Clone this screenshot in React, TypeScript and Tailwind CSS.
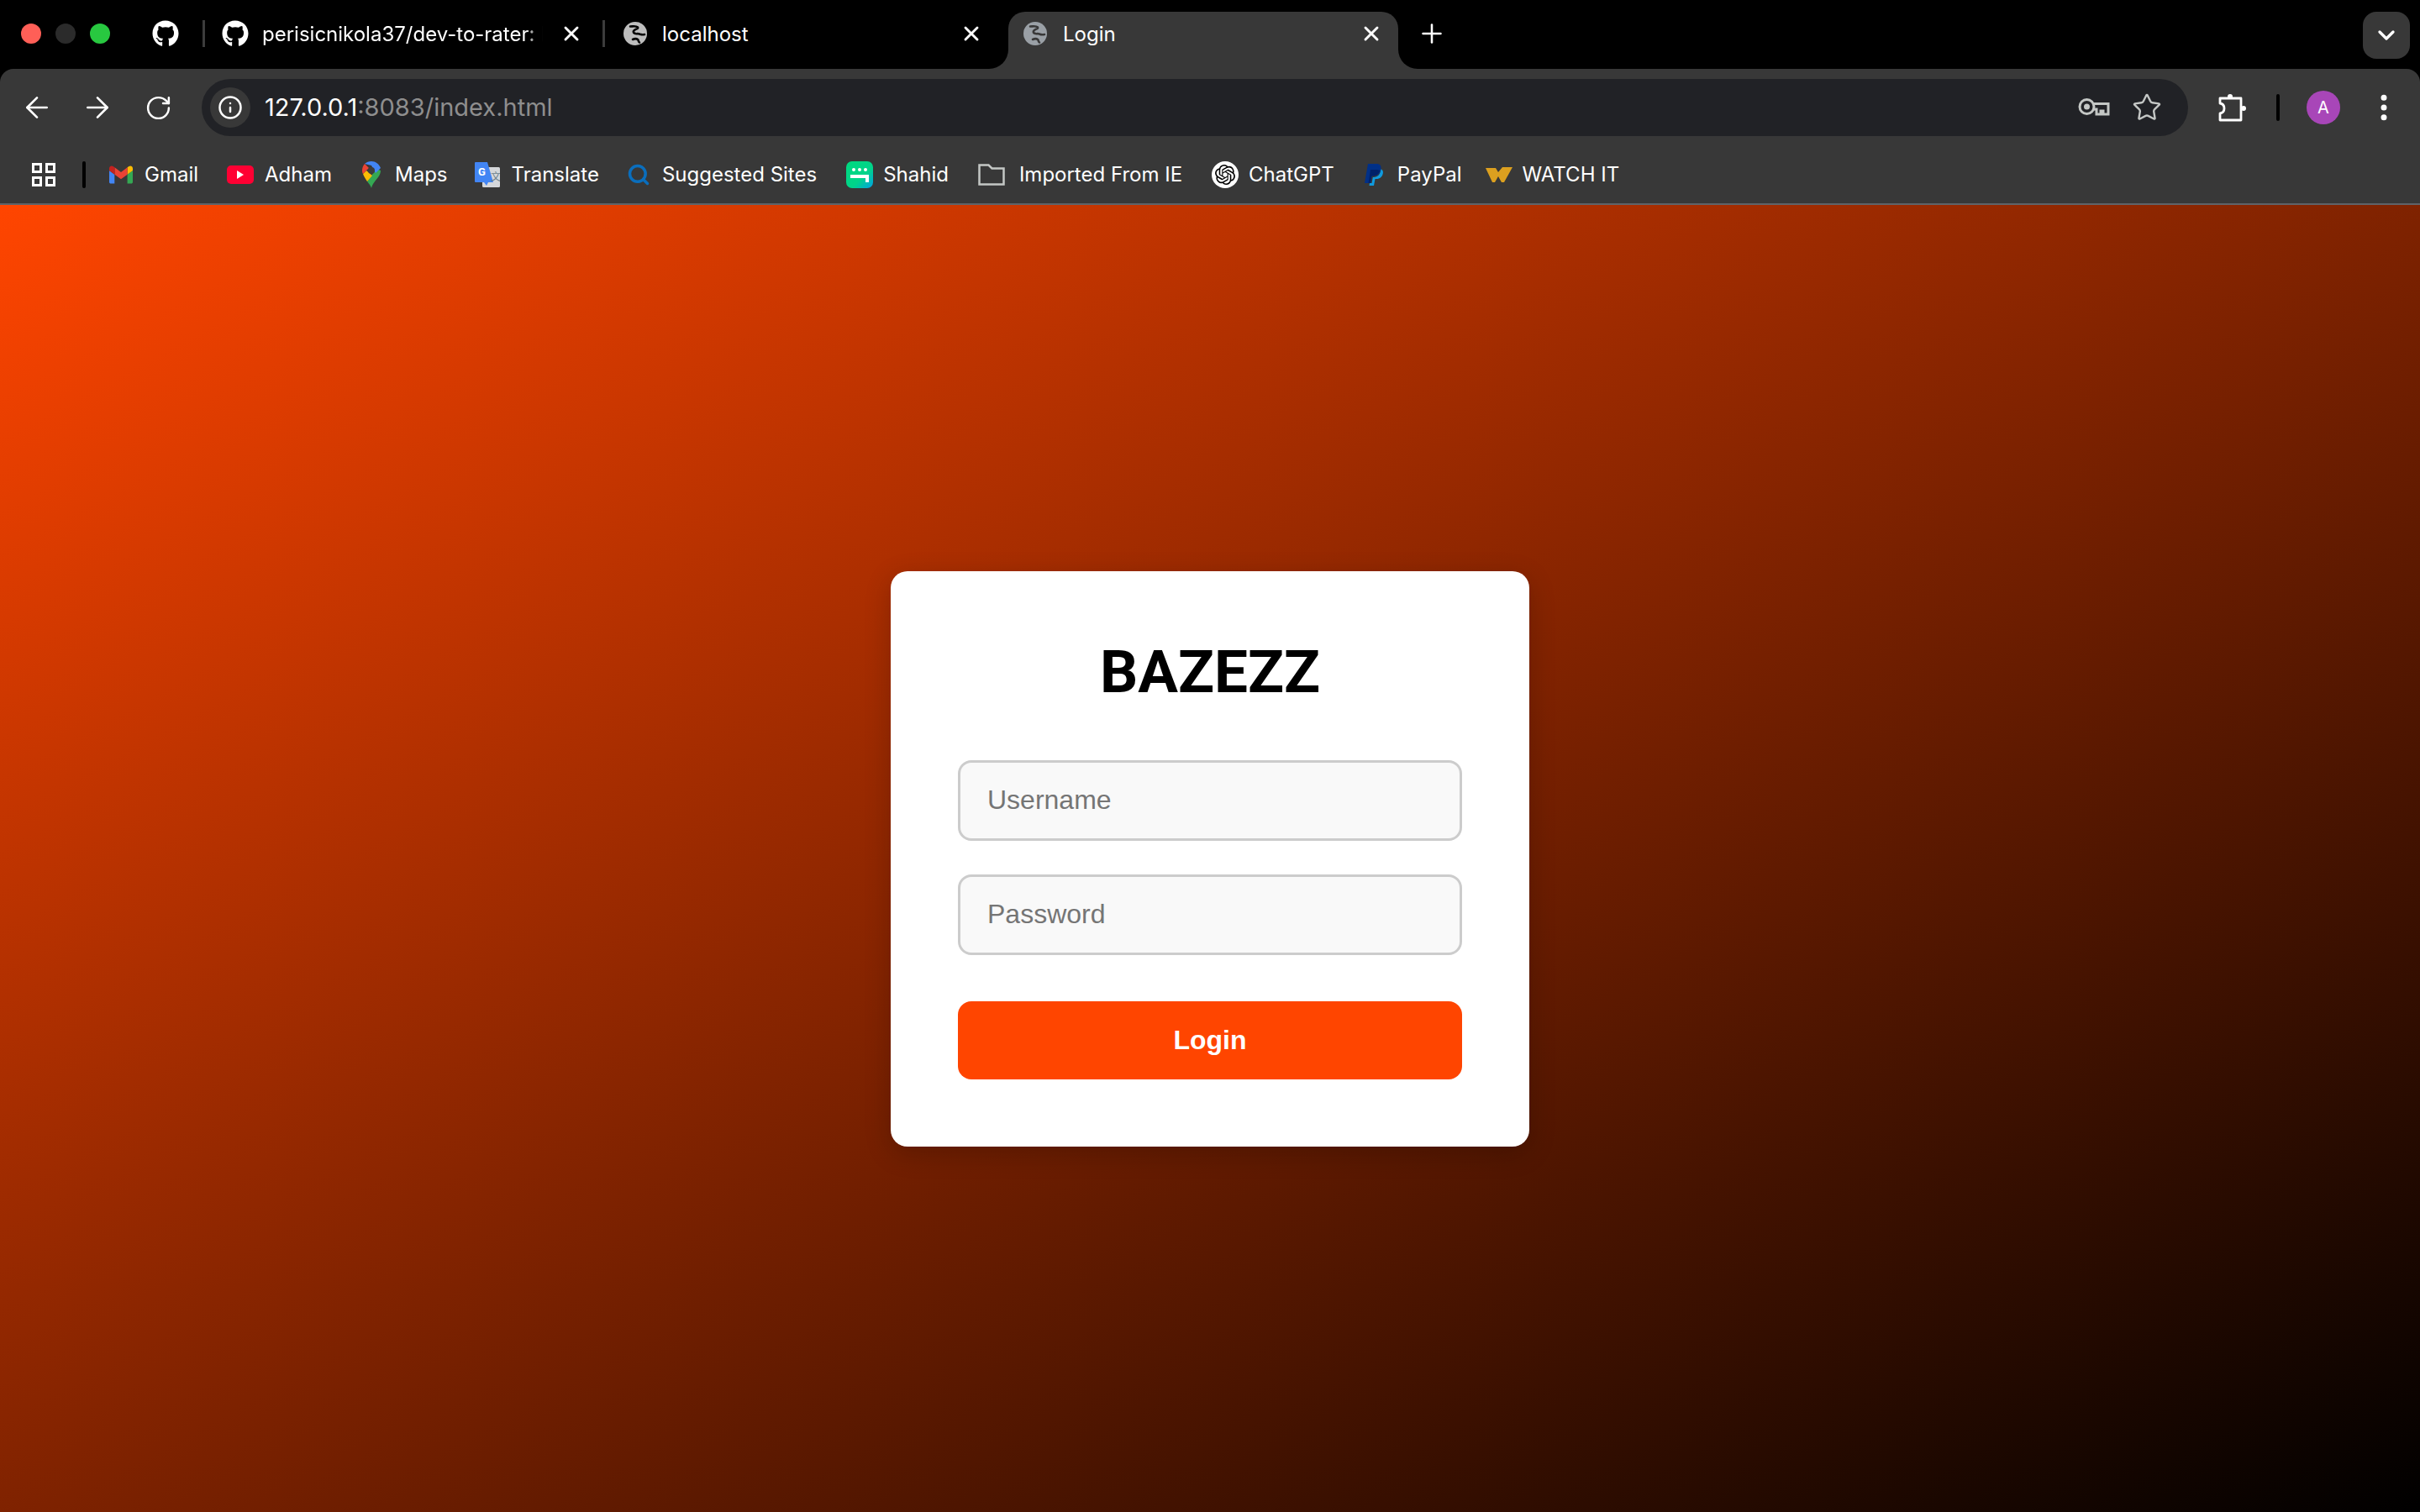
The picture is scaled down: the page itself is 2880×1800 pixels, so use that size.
import { ArrowLeft, ArrowRight, ChevronDown, Info, MoreVertical, Plus, RotateCw, Search, Star, X } from "lucide-react";
import { FaGithub } from "react-icons/fa";
import { SiOpenai } from "react-icons/si";

const uiFont = "font-['Inter','Noto_Sans',sans-serif]";

function GlobeIcon({ fill, line, className }: { fill: string; line: string; className?: string }) {
  return (
    <svg width="28" height="28" viewBox="0 0 28 28" fill="none" className={className}>
      <circle cx="14" cy="14" r="14" fill={fill} />
      <path stroke={line} strokeWidth="2.600" strokeLinecap="round" d="M8 5.500c3 0 7-1 9 1 1 2-4 2-5 4.500-1 3 3 3.500 5 3 2 0 3 2 8 1" />
      <path stroke={line} strokeWidth="2.600" strokeLinecap="round" d="M11 21c2-1 4-1.500 6 0 1 1 .5 2.500 2 3.500" />
    </svg>
  );
}

function GmailIcon() {
  return (
    <svg width="28" height="22" viewBox="0 0 24 18">
      <path fill="#4285F4" d="M1.6 18h3.8V8.800L0 4.700v11.700C0 17.300.7 18 1.600 18z" />
      <path fill="#34A853" d="M18.500 18h3.900c.9 0 1.600-.7 1.600-1.600V4.700l-5.500 4.100z" />
      <path fill="#FBBC04" d="M18.500 1.600v7.200L24 4.700V2.500c0-2-2.300-3.200-3.900-2z" />
      <path fill="#EA4335" d="M5.500 8.800V1.600L12 6.500l6.500-4.900v7.200L12 13.600z" />
      <path fill="#C5221F" d="M0 2.500v2.200l5.500 4.100V1.600L3.900.4C2.300-.8 0 .5 0 2.500z" />
    </svg>
  );
}

function YoutubeIcon() {
  return (
    <div className="w-8 h-[22px] rounded-[5px] bg-[#ff0033] flex items-center justify-center">
      <svg width="10" height="10" viewBox="0 0 10 10">
        <path fill="#fff" d="M1 0l8 5-8 5z" />
      </svg>
    </div>
  );
}

function MapsIcon() {
  return (
    <svg width="22" height="32" viewBox="0 0 22 32">
      <path fill="#34A853" d="M11 32c-1-3-3-5.500-5-8L17 9l5 2c0 3-1 5-3 8-3 4-7 8-8 13z" />
      <path fill="#FBBC04" d="M1 15c1 3 3 6 5 9l6-7-7-6z" />
      <path fill="#EA4335" d="M3 3C1 5 0 8 0 11c0 2 .4 3 1 4l7-7z" />
      <path fill="#4285F4" d="M3 3c2-2 5-3 8-3 5 0 9 3 11 8l-6 6-5-9z" />
      <circle cx="11" cy="11" r="4" fill="#3c3c3c" />
    </svg>
  );
}

function TranslateIcon() {
  return (
    <svg width="30" height="30" viewBox="0 0 30 30">
      <rect x="9" y="6" width="21" height="24" rx="1.500" fill="#d5d7da" />
      <path fill="#4285F4" d="M1 0h14l7 24h-6l-2 4-3-4H1a1 1 0 0 1-1-1V1a1 1 0 0 1 1-1z" />
      <text x="4" y="16" fontSize="13" fontWeight="700" fill="#fff" fontFamily="Roboto, sans-serif">G</text>
      <text x="19" y="22" fontSize="12" fill="#6b7f8c" fontFamily="'Noto Sans CJK SC', sans-serif">文</text>
    </svg>
  );
}

function ShahidIcon() {
  return (
    <div className="w-8 h-8 rounded-[7px] bg-[linear-gradient(135deg,#00d97e,#00d48a_60%,#00a0e6)] flex items-center justify-center">
      <svg width="22" height="18" viewBox="0 0 22 18">
        <circle cx="4" cy="3" r="2" fill="#fff" />
        <circle cx="11" cy="3" r="2" fill="#fff" />
        <circle cx="18" cy="3" r="2" fill="#fff" />
        <path fill="#fff" d="M0 9h22v9h-4v-5H0z" />
      </svg>
    </div>
  );
}

function FolderIcon() {
  return (
    <svg width="32" height="26" viewBox="0 0 32 26" fill="none">
      <path stroke="#c4c7c5" strokeWidth="2.500" d="M1.500 1.500h11l4 4h14v19h-29z" />
    </svg>
  );
}

function ChatgptIcon() {
  return (
    <div className="w-8 h-8 rounded-full bg-white flex items-center justify-center">
      <SiOpenai size={24} color="#000" />
    </div>
  );
}

function PaypalIcon() {
  return (
    <svg width="22" height="26" viewBox="0 0 22 26">
      <path fill="#0f9be0" d="M19 6c2.500 1 3.300 3 2.800 5.500-.8 4-3.600 6.500-7.800 6.500h-1.500L11 26H5.500l.5-3h2.500l1.300-7h1c5 0 8-3.500 8.700-10z" />
      <path fill="#003087" d="M4 0h10c4 0 6 2 5.500 6-.6 5-4 8.500-9 8.500H8.500L7 23H0z" />
      <path fill="#012169" d="M7 7h6c2 0 4 .5 5 1-1 4-4 6.500-8 6.500H8.500L7 23H4.500z" />
    </svg>
  );
}

function WatchitIcon() {
  return (
    <svg width="32" height="24" viewBox="0 0 32 24">
      <path fill="#dca01f" d="M0 4h12l3 5 5-6h12L22 21h-3l-4-7-4 7H8z" />
    </svg>
  );
}

function KeyIcon() {
  return (
    <svg width="38" height="24" viewBox="0 0 38 24" fill="none">
      <circle cx="10.500" cy="11" r="8.500" stroke="#c4c7c5" strokeWidth="3" />
      <circle cx="10.500" cy="11" r="3.500" fill="#c4c7c5" />
      <path stroke="#c4c7c5" strokeWidth="3" d="M19 7.500h17v12.500h-6v-4h-3v4h-5v-6h-4" />
    </svg>
  );
}

function ExtensionIcon() {
  return (
    <svg width="34" height="34" viewBox="0 0 34 34" fill="none">
      <circle cx="14" cy="4" r="3" fill="#fff" />
      <circle cx="30" cy="18" r="3" fill="#fff" />
      <path stroke="#fff" strokeWidth="2.800" strokeLinejoin="round" d="M2 6h25v26H2v-8c3.500-.5 5-3 5-6s-1.500-5.500-5-6z" />
    </svg>
  );
}

function Bookmark({ icon, label, gap, ml }: { icon: React.ReactNode; label: string; gap: string; ml: string }) {
  return (
    <div className={`flex items-center ${gap} ${ml}`}>
      {icon}
      <span className="text-[24px] leading-none text-white whitespace-nowrap">{label}</span>
    </div>
  );
}

function CloseIcon() {
  return <X size={28} strokeWidth={2.5} color="#fff" className="shrink-0" />;
}

export default function App() {
  return (
    <div className={`flex flex-col h-screen bg-black ${uiFont}`}>
      {/* Tab strip */}
      <div className="flex items-start h-[82px] shrink-0">
        <div className="flex items-center h-[80px]">
          <div className="flex items-center gap-[17px] ml-[25px]">
            <div className="w-6 h-6 rounded-full bg-[#ff5f57]" />
            <div className="w-6 h-6 rounded-full bg-[#2b2b2b]" />
            <div className="w-6 h-6 rounded-full bg-[#28c840]" />
          </div>
          <FaGithub size={32} color="#fff" className="ml-[50px] shrink-0" />
          <div className="w-[3px] h-[32px] ml-[28px] bg-[#3c3c3c]" />
          <FaGithub size={32} color="#fff" className="ml-[20px] shrink-0" />
          <span className="ml-4 mt-[2px] w-[334px] overflow-hidden whitespace-nowrap text-[24px] text-white [mask-image:linear-gradient(to_right,black_94%,transparent)]">
            perisicnikola37/dev-to-rater: R
          </span>
          <div className="ml-5"><CloseIcon /></div>
          <div className="w-[3px] h-[32px] ml-[23px] bg-[#3c3c3c]" />
          <GlobeIcon fill="#bdbdbd" line="#000000" className="ml-[22px] shrink-0" />
          <span className="ml-[18px] mt-[2px] w-[354px] text-[24px] text-white">localhost</span>
          <CloseIcon />
        </div>
        <div className="flex items-end h-[82px] ml-[7px]">
          <div className="w-[23px] h-[23px] bg-[#383838]">
            <div className="w-full h-full bg-black rounded-br-[23px]" />
          </div>
          <div className="flex items-center w-[464px] h-[68px] pb-4 pl-[18px] pr-[18px] bg-[#383838] rounded-t-[20px]">
            <GlobeIcon fill="#9aa0a6" line="#383838" className="shrink-0" />
            <span className="ml-[19px] mt-[2px] flex-1 text-[24px] text-white">Login</span>
            <CloseIcon />
          </div>
          <div className="w-[23px] h-[23px] bg-[#383838]">
            <div className="w-full h-full bg-black rounded-bl-[23px]" />
          </div>
        </div>
        <div className="flex items-center h-[80px] -ml-px">
          <Plus size={36} strokeWidth={1.7} color="#fff" />
        </div>
        <div className="ml-auto mr-3 mt-[14px] w-14 h-14 rounded-[16px] bg-[#383838] flex items-center justify-center">
          <ChevronDown size={32} strokeWidth={2.5} color="#fff" />
        </div>
      </div>

      {/* Toolbar and bookmarks */}
      <div className="shrink-0 h-[162px] bg-[#383838] rounded-t-[16px] border-b-2 border-[#5f6368]">
        <div className="flex items-center h-[80px] pt-3">
          <ArrowLeft size={40} strokeWidth={1.6} color="#fff" className="ml-6 shrink-0" />
          <ArrowRight size={40} strokeWidth={1.6} color="#fff" className="ml-8 shrink-0" />
          <RotateCw size={33} strokeWidth={1.8} color="#fff" className="ml-[36px] shrink-0" />
          <div className="flex items-center w-[2364px] h-[68px] ml-[35px] rounded-full bg-[#212226]">
            <div className="ml-[10px] w-12 h-12 rounded-full bg-[#383838] flex items-center justify-center">
              <Info size={30} strokeWidth={2} color="#fff" />
            </div>
            <span className="ml-[17px] text-[29px] text-white">
              127.0.0.1<span className="text-[#8e8e8e]">:8083/index.html</span>
            </span>
            <div className="ml-auto mr-[31px] flex items-center gap-[26px]">
              <KeyIcon />
              <Star size={36} strokeWidth={1.6} color="#c4c7c5" />
            </div>
          </div>
          <div className="ml-[36px] shrink-0"><ExtensionIcon /></div>
          <div className="w-1 h-8 ml-[35px] rounded-full bg-black" />
          <div className="ml-[32px] w-10 h-10 rounded-full bg-[#a846b8] flex items-center justify-center text-[20px] text-white">A</div>
          <MoreVertical size={40} strokeWidth={2.2} color="#fff" className="ml-[32px] shrink-0" />
        </div>
        <div className="flex items-center h-[80px] pt-3">
          <div className="ml-[38px] grid grid-cols-2 gap-1">
            <div className="w-3 h-3 border-[3px] border-white" />
            <div className="w-3 h-3 border-[3px] border-white" />
            <div className="w-3 h-3 border-[3px] border-white" />
            <div className="w-3 h-3 border-[3px] border-white" />
          </div>
          <div className="w-1 h-8 ml-8 rounded-full bg-black" />
          <Bookmark ml="ml-7" gap="gap-[14px]" icon={<GmailIcon />} label="Gmail" />
          <Bookmark ml="ml-[34px]" gap="gap-[13px]" icon={<YoutubeIcon />} label="Adham" />
          <Bookmark ml="ml-[36px]" gap="gap-[17px]" icon={<MapsIcon />} label="Maps" />
          <Bookmark ml="ml-[32px]" gap="gap-[14px]" icon={<TranslateIcon />} label="Translate" />
          <Bookmark ml="ml-[33px]" gap="gap-[14px]" icon={<Search size={28} strokeWidth={3} color="#0a6ebd" />} label="Suggested Sites" />
          <Bookmark ml="ml-[35px]" gap="gap-3" icon={<ShahidIcon />} label="Shahid" />
          <Bookmark ml="ml-[35px]" gap="gap-[17px]" icon={<FolderIcon />} label="Imported From IE" />
          <Bookmark ml="ml-[35px]" gap="gap-3" icon={<ChatgptIcon />} label="ChatGPT" />
          <Bookmark ml="ml-[36px]" gap="gap-[17px]" icon={<PaypalIcon />} label="PayPal" />
          <Bookmark ml="ml-7" gap="gap-3" icon={<WatchitIcon />} label="WATCH IT" />
        </div>
      </div>

      {/* Page */}
      <div className="flex-1 flex items-center justify-center bg-[linear-gradient(to_bottom_right,#ff4500,#000000)]">
        <div className="w-[760px] p-20 rounded-[20px] bg-white shadow-[0_8px_32px_rgba(0,0,0,0.2)]">
          <h1 className="mb-[65px] text-center font-['Roboto',sans-serif] font-bold text-[71px] leading-[80px] text-black">BAZEZZ</h1>
          <input
            placeholder="Username"
            className="block w-full h-24 px-8 mb-10 rounded-[16px] border-[3px] border-[#cccccc] bg-[#f9f9f9] font-['Liberation_Sans',sans-serif] text-[32px] placeholder:text-[#757575]"
          />
          <input
            placeholder="Password"
            className="block w-full h-24 px-8 rounded-[16px] border-[3px] border-[#cccccc] bg-[#f9f9f9] font-['Liberation_Sans',sans-serif] text-[32px] placeholder:text-[#757575]"
          />
          <button className="block w-full h-[93px] mt-[55px] rounded-[16px] bg-[#ff4500] font-['Liberation_Sans',sans-serif] font-bold text-[32px] text-white">
            Login
          </button>
        </div>
      </div>
    </div>
  );
}
